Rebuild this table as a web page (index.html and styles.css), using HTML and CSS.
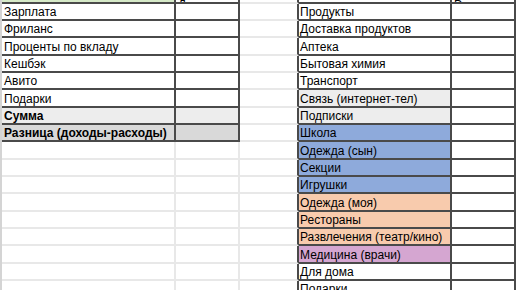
FILE: index.html
```html
<!DOCTYPE html>
<html lang="ru">
<head>
<meta charset="utf-8">
<title>Бюджет</title>
<link rel="stylesheet" href="styles.css">
</head>
<body>
<div class="sheet">
  <div class="row">
    <div class="c edge"></div>
    <div class="c t green hdr"></div>
    <div class="c t hdr"><span>Доход</span></div>
    <div class="c cr"></div>
    <div class="c t d hdr"></div>
    <div class="c t hdr"><span>Расход</span></div>
  </div>
  <div class="row">
    <div class="c edge"></div>
    <div class="c t">Зарплата</div>
    <div class="c t"></div>
    <div class="c cr"></div>
    <div class="c t d">Продукты</div>
    <div class="c t"></div>
  </div>
  <div class="row">
    <div class="c edge"></div>
    <div class="c t">Фриланс</div>
    <div class="c t"></div>
    <div class="c cr"></div>
    <div class="c t d">Доставка продуктов</div>
    <div class="c t"></div>
  </div>
  <div class="row">
    <div class="c edge"></div>
    <div class="c t">Проценты по вкладу</div>
    <div class="c t"></div>
    <div class="c cr"></div>
    <div class="c t d">Аптека</div>
    <div class="c t"></div>
  </div>
  <div class="row">
    <div class="c edge"></div>
    <div class="c t">Кешбэк</div>
    <div class="c t"></div>
    <div class="c cr"></div>
    <div class="c t d">Бытовая химия</div>
    <div class="c t"></div>
  </div>
  <div class="row">
    <div class="c edge"></div>
    <div class="c t">Авито</div>
    <div class="c t"></div>
    <div class="c cr"></div>
    <div class="c t d">Транспорт</div>
    <div class="c t"></div>
  </div>
  <div class="row">
    <div class="c edge"></div>
    <div class="c t">Подарки</div>
    <div class="c t"></div>
    <div class="c cr"></div>
    <div class="c t d gray">Связь (интернет-тел)</div>
    <div class="c t"></div>
  </div>
  <div class="row">
    <div class="c edge"></div>
    <div class="c t gray bold">Сумма</div>
    <div class="c t gray"></div>
    <div class="c cr"></div>
    <div class="c t d gray">Подписки</div>
    <div class="c t"></div>
  </div>
  <div class="row">
    <div class="c edge"></div>
    <div class="c t dark bold">Разница (доходы-расходы)</div>
    <div class="c t dark"></div>
    <div class="c cr"></div>
    <div class="c t d blue">Школа</div>
    <div class="c t"></div>
  </div>
  <div class="row">
    <div class="c edge"></div>
    <div class="c"></div>
    <div class="c"></div>
    <div class="c cr"></div>
    <div class="c t d blue">Одежда (сын)</div>
    <div class="c t"></div>
  </div>
  <div class="row">
    <div class="c edge"></div>
    <div class="c"></div>
    <div class="c"></div>
    <div class="c cr"></div>
    <div class="c t d blue">Секции</div>
    <div class="c t"></div>
  </div>
  <div class="row">
    <div class="c edge"></div>
    <div class="c"></div>
    <div class="c"></div>
    <div class="c cr"></div>
    <div class="c t d blue">Игрушки</div>
    <div class="c t"></div>
  </div>
  <div class="row">
    <div class="c edge"></div>
    <div class="c"></div>
    <div class="c"></div>
    <div class="c cr"></div>
    <div class="c t d peach">Одежда (моя)</div>
    <div class="c t"></div>
  </div>
  <div class="row">
    <div class="c edge"></div>
    <div class="c"></div>
    <div class="c"></div>
    <div class="c cr"></div>
    <div class="c t d peach">Рестораны</div>
    <div class="c t"></div>
  </div>
  <div class="row">
    <div class="c edge"></div>
    <div class="c"></div>
    <div class="c"></div>
    <div class="c cr"></div>
    <div class="c t d peach">Развлечения (театр/кино)</div>
    <div class="c t"></div>
  </div>
  <div class="row">
    <div class="c edge"></div>
    <div class="c"></div>
    <div class="c"></div>
    <div class="c cr"></div>
    <div class="c t d pink">Медицина (врачи)</div>
    <div class="c t"></div>
  </div>
  <div class="row">
    <div class="c edge"></div>
    <div class="c"></div>
    <div class="c"></div>
    <div class="c cr"></div>
    <div class="c t d">Для дома</div>
    <div class="c t"></div>
  </div>
  <div class="row">
    <div class="c edge"></div>
    <div class="c"></div>
    <div class="c"></div>
    <div class="c cr"></div>
    <div class="c t d">Подарки</div>
    <div class="c t"></div>
  </div>
</div>
</body>
</html>
```

FILE: styles.css
```css
html, body {
  margin: 0;
  padding: 0;
  height: 290px;
  overflow: hidden;
  background: #ffffff;
}

.sheet {
  display: grid;
  grid-template-columns: 2px 174px 64px 59px 153px 64px;
  grid-template-rows: 3.7px repeat(17, 17.333px);
  font-family: "Liberation Sans", Arial, sans-serif;
  font-size: 12px;
  color: #000;
}

.row {
  display: contents;
}

.c {
  box-sizing: border-box;
  display: flex;
  align-items: flex-end;
  padding: 0 2px;
  line-height: 13px;
  white-space: nowrap;
  overflow: hidden;
  border-right: 2px solid #e8e8e8;
  border-bottom: 2px solid #e8e8e8;
  background: #ffffff;
}

.edge {
  border: 0;
  padding: 0;
  background: #d4d4d4;
}

.t {
  border-right-color: #4a4a4a;
  border-bottom-color: #4a4a4a;
}

.cr {
  border-right-color: #4a4a4a;
}

.d {
  padding-left: 1px;
}

.hdr span {
  margin-bottom: -10px;
}

.bold {
  font-weight: bold;
}

.green { background: #d6eac8; }
.gray { background: #ededed; }
.dark { background: #d9d9d9; }
.blue { background: #8eaadb; }
.peach { background: #f8cbad; }
.pink { background: #d5a6d1; }
```
